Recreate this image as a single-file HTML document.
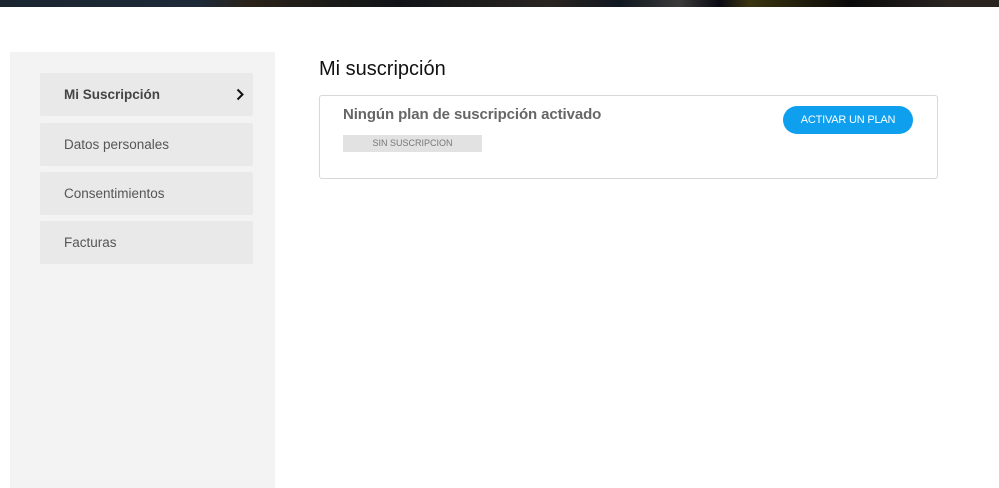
<!DOCTYPE html>
<html><head><style>
body{margin:0;width:999px;height:488px;background:#fff;font-family:"Liberation Sans",Arial,sans-serif;position:relative;overflow:hidden}
.top{position:absolute;left:0;top:0;width:999px;height:7px;background:linear-gradient(90deg,#1a2530 0%,#1e2a38 20%,#2a2218 25%,#101418 40%,#2a2420 55%,#101820 62%,#3a3a3a 68%,#0a0a14 72%,#3a3410 75%,#0a0a0a 85%,#2a2420 95%);}
.side{position:absolute;left:10px;top:52px;width:265px;height:436px;background:#f3f3f3}
.item{position:absolute;left:40px;width:213px;height:43px;background:#e9e9e9;border-radius:2px;font-size:13.5px;color:#555;line-height:43px;padding-left:24px;box-sizing:border-box}
h1{position:absolute;left:319px;top:58px;margin:0;font-size:20px;font-weight:normal;color:#111}
.card{position:absolute;left:319px;top:95px;width:619px;height:84px;border:1px solid #d8d8d8;border-radius:3px;box-sizing:border-box}
.t{position:absolute;left:343px;top:106px;font-size:15px;font-weight:bold;color:#666;letter-spacing:-0.1px}
.badge{position:absolute;left:343px;top:135px;width:139px;height:17px;background:#e2e2e2;font-size:9px;color:#777;text-align:center;line-height:17px}
.btn{position:absolute;left:783px;top:106px;width:130px;height:28px;background:#0ea0ef;border-radius:14px;color:#fff;font-size:11px;text-align:center;line-height:28px;letter-spacing:-0.2px}
</style></head><body>
<div class="top"></div>
<div class="side"></div>
<div class="item" style="top:73px;font-weight:bold;color:#444">Mi Suscripción
<svg style="position:absolute;right:9px;top:15px" width="8" height="13" viewBox="0 0 8 13"><path d="M1.5 1.5 L6.5 6.5 L1.5 11.5" stroke="#111" stroke-width="2" fill="none"/></svg></div>
<div class="item" style="top:123px">Datos personales</div>
<div class="item" style="top:172px">Consentimientos</div>
<div class="item" style="top:221px">Facturas</div>
<h1>Mi suscripción</h1>
<div class="card"></div>
<div class="t">Ningún plan de suscripción activado</div>
<div class="badge">SIN SUSCRIPCION</div>
<div class="btn">ACTIVAR UN PLAN</div>
</body></html>
